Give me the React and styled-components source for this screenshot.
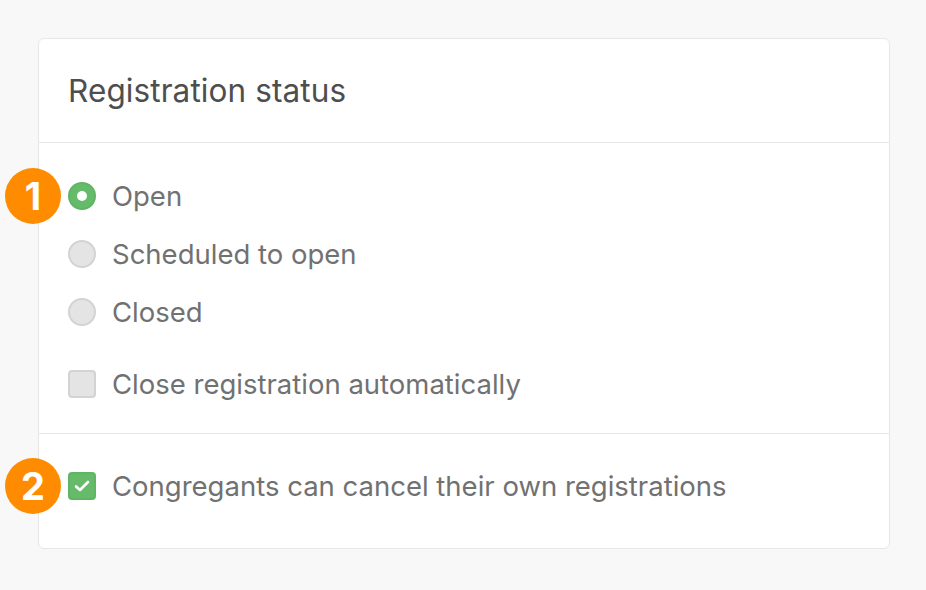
import React from "react";
import styled, { createGlobalStyle } from "styled-components";

const Global = createGlobalStyle`
  html, body {
    margin: 0;
    padding: 0;
    background: #f7f8f7;
    font-family: Inter, "Liberation Sans", Arial, sans-serif;
  }
`;

const Page = styled.div`
  padding: 38px 36px 40px 38px;
`;

const Card = styled.div`
  background: #fff;
  border: 1px solid #e6e7e6;
  border-radius: 6px;
`;

const Header = styled.div`
  height: 103px;
  display: flex;
  align-items: center;
  padding: 0 29px;
  border-bottom: 1px solid #e8e8e8;
`;

const Title = styled.h2`
  margin: 0;
  font-size: 31.5px;
  font-weight: 400;
  color: #4e4e4e;
  letter-spacing: 0.1px;
`;

const Section = styled.div`
  padding: ${(p) => p.$pad};
  border-top: ${(p) => (p.$divided ? "1px solid #e8e8e8" : "none")};
`;

const Row = styled.label`
  position: relative;
  display: flex;
  align-items: center;
  gap: 16px;
  height: 58px;
  padding-left: 29px;
  margin-top: ${(p) => p.$gapTop || 0}px;
`;

const Label = styled.span`
  font-size: 27.5px;
  color: #717171;
`;

const Radio = styled.span`
  box-sizing: border-box;
  width: 28px;
  height: 28px;
  border-radius: 50%;
  flex: none;
  display: flex;
  align-items: center;
  justify-content: center;
  background: ${(p) => (p.$on ? "#66bb6a" : "#e4e4e4")};
  border: 2px solid ${(p) => (p.$on ? "#5fb563" : "#d3d3d3")};
  &::after {
    content: "";
    display: ${(p) => (p.$on ? "block" : "none")};
    width: 10px;
    height: 10px;
    border-radius: 50%;
    background: #fff;
  }
`;

const Box = styled.span`
  box-sizing: border-box;
  width: 28px;
  height: 28px;
  border-radius: 4px;
  flex: none;
  display: flex;
  align-items: center;
  justify-content: center;
  background: ${(p) => (p.$on ? "#66bb6a" : "#e4e4e4")};
  border: 2px solid ${(p) => (p.$on ? "#5fb563" : "#d3d3d3")};
`;

const Badge = styled.span`
  position: absolute;
  left: -34px;
  top: 50%;
  transform: translateY(-50%);
  width: 56px;
  height: 56px;
  border-radius: 50%;
  background: #ff8c00;
  color: #fff;
  font-size: 38px;
  font-weight: 700;
  display: flex;
  align-items: center;
  justify-content: center;
`;

const Check = () => (
  <svg width="16" height="14" viewBox="0 0 16 14">
    <path d="M2 7.5 L6 11 L14 3" fill="none" stroke="#fff" strokeWidth="2.6" strokeLinecap="round" strokeLinejoin="round" />
  </svg>
);

export default function App() {
  return (
    <Page>
      <Global />
      <Card>
        <Header>
          <Title>Registration status</Title>
        </Header>
        <Section $pad="24px 0 20px">
          <Row>
            <Badge>1</Badge>
            <Radio $on />
            <Label>Open</Label>
          </Row>
          <Row>
            <Radio />
            <Label>Scheduled to open</Label>
          </Row>
          <Row>
            <Radio />
            <Label>Closed</Label>
          </Row>
          <Row $gapTop={14}>
            <Box />
            <Label>Close registration automatically</Label>
          </Row>
        </Section>
        <Section $divided $pad="23px 0 33px">
          <Row>
            <Badge>2</Badge>
            <Box $on>
              <Check />
            </Box>
            <Label>Congregants can cancel their own registrations</Label>
          </Row>
        </Section>
      </Card>
    </Page>
  );
}
